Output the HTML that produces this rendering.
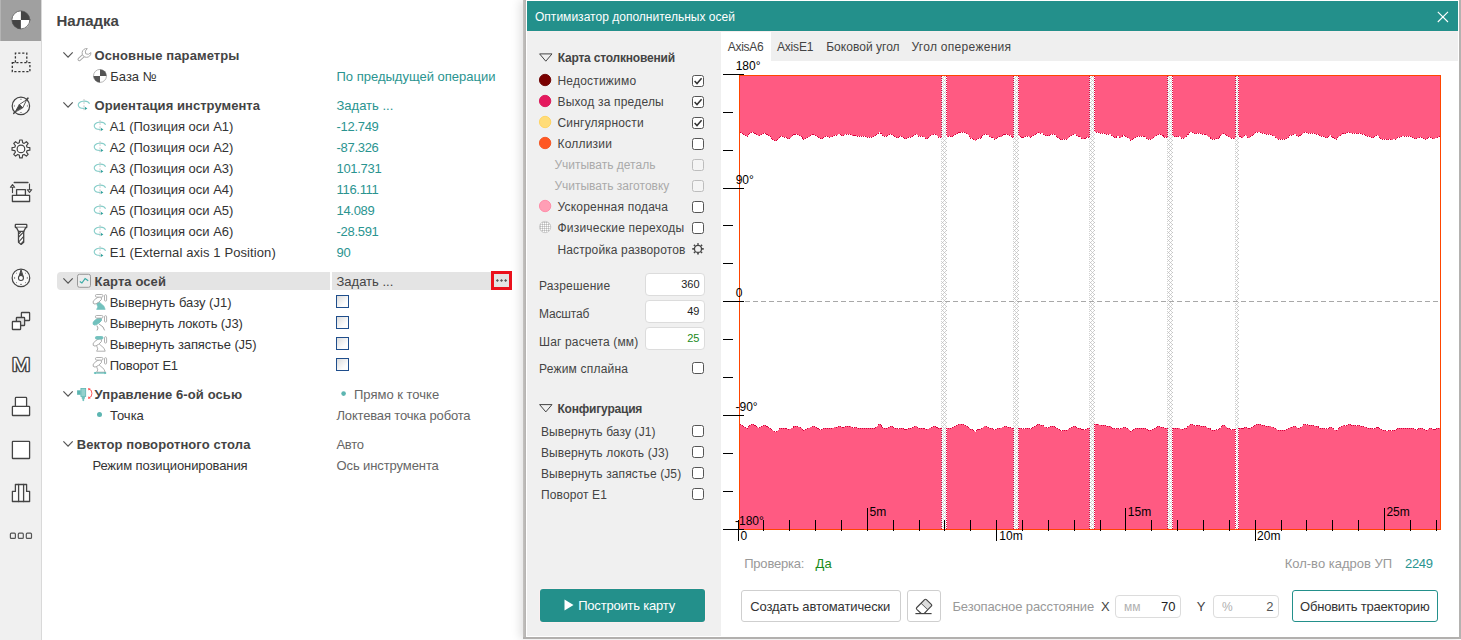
<!DOCTYPE html>
<html lang="ru"><head><meta charset="utf-8"><title>Оптимизатор дополнительных осей</title>
<style>
html,body{margin:0;padding:0;background:#fff;}
body{width:1461px;height:640px;position:relative;overflow:hidden;font-family:"Liberation Sans", sans-serif;}
.t{position:absolute;white-space:nowrap;line-height:1;}
.b{position:absolute;}
svg{position:absolute;left:0;top:0;overflow:visible}
</style></head><body>
<div class="b" style="left:0px;top:0px;width:41px;height:640px;background:#f0f0f0"></div>
<div class="b" style="left:41px;top:0px;width:1px;height:640px;background:#d9d9d9"></div>
<div class="b" style="left:0px;top:0px;width:41px;height:41px;background:#a0a0a0"></div>
<div class="b" style="left:0px;top:0px;width:1px;height:41px;background:#b4b4b4"></div>
<div class="t" style="left:56.5px;top:13.30px;font-size:15px;font-weight:bold;color:#444;">Наладка</div>
<div class="t" style="left:94.5px;top:49.00px;font-size:13px;font-weight:bold;color:#444;letter-spacing:0.1px;">Основные параметры</div>
<div class="t" style="left:110.3px;top:70.00px;font-size:13px;color:#333;">База №</div>
<div class="t" style="left:336.5px;top:70.00px;font-size:13px;color:#2a9490;">По предыдущей операции</div>
<div class="t" style="left:94.5px;top:99.00px;font-size:13px;font-weight:bold;color:#444;letter-spacing:0.05px;">Ориентация инструмента</div>
<div class="t" style="left:336.5px;top:99.00px;font-size:13px;color:#2a9490;">Задать ...</div>
<div class="t" style="left:109.7px;top:120.00px;font-size:13px;color:#333;">A1 (Позиция оси A1)</div>
<div class="t" style="left:336.5px;top:120.00px;font-size:13px;color:#2a9490;letter-spacing:-0.3px;">-12.749</div>
<div class="t" style="left:109.7px;top:141.00px;font-size:13px;color:#333;">A2 (Позиция оси A2)</div>
<div class="t" style="left:336.5px;top:141.00px;font-size:13px;color:#2a9490;letter-spacing:-0.3px;">-87.326</div>
<div class="t" style="left:109.7px;top:162.00px;font-size:13px;color:#333;">A3 (Позиция оси A3)</div>
<div class="t" style="left:336.5px;top:162.00px;font-size:13px;color:#2a9490;letter-spacing:-0.3px;">101.731</div>
<div class="t" style="left:109.7px;top:183.00px;font-size:13px;color:#333;">A4 (Позиция оси A4)</div>
<div class="t" style="left:336.5px;top:183.00px;font-size:13px;color:#2a9490;letter-spacing:-0.3px;">116.111</div>
<div class="t" style="left:109.7px;top:204.00px;font-size:13px;color:#333;">A5 (Позиция оси A5)</div>
<div class="t" style="left:336.5px;top:204.00px;font-size:13px;color:#2a9490;letter-spacing:-0.3px;">14.089</div>
<div class="t" style="left:109.7px;top:225.00px;font-size:13px;color:#333;">A6 (Позиция оси A6)</div>
<div class="t" style="left:336.5px;top:225.00px;font-size:13px;color:#2a9490;letter-spacing:-0.3px;">-28.591</div>
<div class="t" style="left:109.7px;top:246.00px;font-size:13px;color:#333;letter-spacing:0.1px;">E1 (External axis 1 Position)</div>
<div class="t" style="left:336.5px;top:246.00px;font-size:13px;color:#2a9490;letter-spacing:-0.3px;">90</div>
<div class="b" style="left:57px;top:272px;width:273px;height:18px;background:#e4e4e4;border-radius:4px 0 0 4px"></div>
<div class="b" style="left:332px;top:272px;width:160px;height:18px;background:#e4e4e4"></div>
<div class="b" style="left:491px;top:271px;width:21px;height:19px;background:#e4e4e4;border:3px solid #eb111c;box-sizing:border-box"></div>
<div class="t" style="left:94.5px;top:275.00px;font-size:13px;font-weight:bold;color:#444;letter-spacing:0.1px;">Карта осей</div>
<div class="t" style="left:336.5px;top:275.00px;font-size:13px;color:#444;">Задать ...</div>
<div class="t" style="left:109.7px;top:296.00px;font-size:13px;color:#333;">Вывернуть базу (J1)</div>
<div class="b" style="left:336px;top:295px;width:13px;height:13px;box-sizing:border-box;border:1px solid #1f4e8c;background:linear-gradient(135deg,#dcdcdc,#fdfdfd 70%)"></div>
<div class="t" style="left:109.7px;top:317.00px;font-size:13px;color:#333;letter-spacing:-0.13px;">Вывернуть локоть (J3)</div>
<div class="b" style="left:336px;top:316px;width:13px;height:13px;box-sizing:border-box;border:1px solid #1f4e8c;background:linear-gradient(135deg,#dcdcdc,#fdfdfd 70%)"></div>
<div class="t" style="left:109.7px;top:338.00px;font-size:13px;color:#333;letter-spacing:-0.1px;">Вывернуть запястье (J5)</div>
<div class="b" style="left:336px;top:337px;width:13px;height:13px;box-sizing:border-box;border:1px solid #1f4e8c;background:linear-gradient(135deg,#dcdcdc,#fdfdfd 70%)"></div>
<div class="t" style="left:109.7px;top:359.00px;font-size:13px;color:#333;letter-spacing:-0.2px;">Поворот E1</div>
<div class="b" style="left:336px;top:358px;width:13px;height:13px;box-sizing:border-box;border:1px solid #1f4e8c;background:linear-gradient(135deg,#dcdcdc,#fdfdfd 70%)"></div>
<div class="t" style="left:94.5px;top:388.00px;font-size:13px;font-weight:bold;color:#444;letter-spacing:0.1px;">Управление 6-ой осью</div>
<div class="t" style="left:354px;top:388.00px;font-size:13px;color:#666;">Прямо к точке</div>
<div class="t" style="left:110px;top:409.00px;font-size:13px;color:#333;">Точка</div>
<div class="t" style="left:336.5px;top:409.00px;font-size:13px;color:#666;letter-spacing:-0.17px;">Локтевая точка робота</div>
<div class="t" style="left:76.7px;top:438.00px;font-size:13px;font-weight:bold;color:#444;letter-spacing:0.1px;">Вектор поворотного стола</div>
<div class="t" style="left:336.5px;top:437.60px;font-size:13px;color:#666;letter-spacing:-0.3px;">Авто</div>
<div class="t" style="left:92.4px;top:459.00px;font-size:13px;color:#333;letter-spacing:-0.1px;">Режим позиционирования</div>
<div class="t" style="left:336.5px;top:459.00px;font-size:13px;color:#666;letter-spacing:-0.1px;">Ось инструмента</div>
<div class="b" style="left:523px;top:0px;width:938px;height:639px;background:#fff;box-shadow:-3px 0 9px rgba(0,0,0,0.12);"></div>
<div class="b" style="left:523px;top:0px;width:3px;height:639px;background:linear-gradient(90deg,#c4c2c0,#b4b2b0)"></div>
<div class="b" style="left:523px;top:637px;width:938px;height:2px;background:#b2b0ae"></div>
<div class="b" style="left:1459px;top:0px;width:2px;height:639px;background:#b4b2b0"></div>
<div class="b" style="left:526px;top:0px;width:933px;height:1px;background:#fff"></div>
<div class="b" style="left:527px;top:1px;width:931px;height:30px;background:#23908b"></div>
<div class="t" style="left:535px;top:11.34px;font-size:12px;color:#fff;letter-spacing:0.02px;">Оптимизатор дополнительных осей</div>
<div class="b" style="left:527px;top:32px;width:194px;height:604px;background:#f0f0f0"></div>
<div class="b" style="left:771px;top:31px;width:687px;height:29.5px;background:#efefef"></div>
<div class="b" style="left:527px;top:31px;width:931px;height:1px;background:#f8eeee"></div>
<div class="t" style="left:557.7px;top:51.64px;font-size:12px;font-weight:bold;color:#444;letter-spacing:-0.2px;">Карта столкновений</div>
<div class="t" style="left:557.5px;top:74.54px;font-size:12px;color:#444;letter-spacing:0.2px;">Недостижимо</div>
<div class="b" style="left:692px;top:75px;width:12px;height:12px;box-sizing:border-box;border:1px solid #555;border-radius:2.5px;background:#fff"></div>
<svg class="b" style="left:692px;top:75px" width="12" height="12" viewBox="0 0 12 12"><path d="M2.6 6.1 L5 8.6 L9.6 3.2" fill="none" stroke="#333" stroke-width="1.5"/></svg>
<div class="t" style="left:557.5px;top:95.54px;font-size:12px;color:#444;letter-spacing:0.2px;">Выход за пределы</div>
<div class="b" style="left:692px;top:96px;width:12px;height:12px;box-sizing:border-box;border:1px solid #555;border-radius:2.5px;background:#fff"></div>
<svg class="b" style="left:692px;top:96px" width="12" height="12" viewBox="0 0 12 12"><path d="M2.6 6.1 L5 8.6 L9.6 3.2" fill="none" stroke="#333" stroke-width="1.5"/></svg>
<div class="t" style="left:557.5px;top:116.54px;font-size:12px;color:#444;letter-spacing:0.2px;">Сингулярности</div>
<div class="b" style="left:692px;top:117px;width:12px;height:12px;box-sizing:border-box;border:1px solid #555;border-radius:2.5px;background:#fff"></div>
<svg class="b" style="left:692px;top:117px" width="12" height="12" viewBox="0 0 12 12"><path d="M2.6 6.1 L5 8.6 L9.6 3.2" fill="none" stroke="#333" stroke-width="1.5"/></svg>
<div class="t" style="left:557.5px;top:137.54px;font-size:12px;color:#444;letter-spacing:0.2px;">Коллизии</div>
<div class="b" style="left:692px;top:138px;width:12px;height:12px;box-sizing:border-box;border:1px solid #555;border-radius:2.5px;background:#fff"></div>
<div class="t" style="left:554.4px;top:158.54px;font-size:12px;color:#aaa;">Учитывать деталь</div>
<div class="b" style="left:692px;top:159px;width:12px;height:12px;box-sizing:border-box;border:1px solid #bdbdbd;border-radius:2.5px;background:#f4f4f4"></div>
<div class="t" style="left:554.4px;top:179.54px;font-size:12px;color:#aaa;">Учитывать заготовку</div>
<div class="b" style="left:692px;top:180px;width:12px;height:12px;box-sizing:border-box;border:1px solid #bdbdbd;border-radius:2.5px;background:#f4f4f4"></div>
<div class="t" style="left:557.5px;top:200.54px;font-size:12px;color:#444;letter-spacing:0.2px;">Ускоренная подача</div>
<div class="b" style="left:692px;top:201px;width:12px;height:12px;box-sizing:border-box;border:1px solid #555;border-radius:2.5px;background:#fff"></div>
<div class="t" style="left:557.5px;top:221.54px;font-size:12px;color:#444;letter-spacing:0.2px;">Физические переходы</div>
<div class="b" style="left:692px;top:222px;width:12px;height:12px;box-sizing:border-box;border:1px solid #555;border-radius:2.5px;background:#fff"></div>
<div class="t" style="left:557.5px;top:243.54px;font-size:12px;color:#444;letter-spacing:0.12px;">Настройка разворотов</div>
<div class="t" style="left:539px;top:279.54px;font-size:12px;color:#444;letter-spacing:0.2px;">Разрешение</div>
<div class="b" style="left:645px;top:273px;width:60px;height:23px;box-sizing:border-box;border:1px solid #dcdcdc;border-radius:4px;background:#fff"></div>
<div class="t" style="right:761.5px;top:279.39px;font-size:11px;color:#222;">360</div>
<div class="t" style="left:539px;top:308.04px;font-size:12px;color:#444;letter-spacing:-0.15px;">Масштаб</div>
<div class="b" style="left:645px;top:300px;width:60px;height:23px;box-sizing:border-box;border:1px solid #dcdcdc;border-radius:4px;background:#fff"></div>
<div class="t" style="right:761.5px;top:306.39px;font-size:11px;color:#222;">49</div>
<div class="t" style="left:539px;top:335.94px;font-size:12px;color:#444;letter-spacing:0.15px;">Шаг расчета (мм)</div>
<div class="b" style="left:645px;top:327px;width:60px;height:23px;box-sizing:border-box;border:1px solid #dcdcdc;border-radius:4px;background:#fff"></div>
<div class="t" style="right:761.5px;top:333.39px;font-size:11px;color:#1a8a1a;">25</div>
<div class="t" style="left:539px;top:363.34px;font-size:12px;color:#444;letter-spacing:0.2px;">Режим сплайна</div>
<div class="b" style="left:692px;top:362px;width:12px;height:12px;box-sizing:border-box;border:1px solid #555;border-radius:2.5px;background:#fff"></div>
<div class="t" style="left:557.5px;top:402.84px;font-size:12px;font-weight:bold;color:#444;letter-spacing:-0.2px;">Конфигурация</div>
<div class="t" style="left:541px;top:425.54px;font-size:12px;color:#444;letter-spacing:0.12px;">Вывернуть базу (J1)</div>
<div class="b" style="left:692px;top:425px;width:12px;height:12px;box-sizing:border-box;border:1px solid #555;border-radius:2.5px;background:#fff"></div>
<div class="t" style="left:541px;top:446.54px;font-size:12px;color:#444;letter-spacing:0.12px;">Вывернуть локоть (J3)</div>
<div class="b" style="left:692px;top:446px;width:12px;height:12px;box-sizing:border-box;border:1px solid #555;border-radius:2.5px;background:#fff"></div>
<div class="t" style="left:541px;top:467.54px;font-size:12px;color:#444;letter-spacing:0.12px;">Вывернуть запястье (J5)</div>
<div class="b" style="left:692px;top:467px;width:12px;height:12px;box-sizing:border-box;border:1px solid #555;border-radius:2.5px;background:#fff"></div>
<div class="t" style="left:541px;top:488.54px;font-size:12px;color:#444;letter-spacing:0.12px;">Поворот E1</div>
<div class="b" style="left:692px;top:488px;width:12px;height:12px;box-sizing:border-box;border:1px solid #555;border-radius:2.5px;background:#fff"></div>
<div class="b" style="left:540px;top:589px;width:165px;height:33px;background:#23908b;border-radius:3px;box-shadow:0 0 0 1px #fbefef"></div>
<div class="t" style="left:578.2px;top:599.00px;font-size:13px;color:#fff;letter-spacing:-0.2px;">Построить карту</div>
<svg class="b" style="left:562.7px;top:598px" width="12" height="14" viewBox="0 0 12 14"><path d="M1.5 1.5 L10.5 7 L1.5 12.5 Z" fill="#fff"/></svg>
<div class="t" style="left:727.8px;top:40.54px;font-size:12px;color:#444;letter-spacing:-0.3px;">AxisA6</div>
<div class="t" style="left:776.9px;top:40.54px;font-size:12px;color:#444;letter-spacing:-0.15px;">AxisE1</div>
<div class="t" style="left:826.2px;top:40.54px;font-size:12px;color:#444;letter-spacing:0.03px;">Боковой угол</div>
<div class="t" style="left:911.4px;top:40.54px;font-size:12px;color:#444;letter-spacing:0.3px;">Угол опережения</div>
<div class="t" style="left:744.2px;top:557.30px;font-size:13px;color:#999;letter-spacing:-0.2px;">Проверка:</div>
<div class="t" style="left:815.6px;top:557.30px;font-size:13px;color:#1a8a1a;">Да</div>
<div class="t" style="left:1284.7px;top:557.30px;font-size:13px;color:#999;">Кол-во кадров УП</div>
<div class="t" style="left:1405px;top:557.30px;font-size:13px;color:#2a9490;letter-spacing:-0.3px;">2249</div>
<div class="b" style="left:741px;top:590px;width:160px;height:32px;box-sizing:border-box;border:1px solid #cfcfcf;border-radius:3px;background:#fff"></div>
<div class="t" style="left:750.3px;top:600.30px;font-size:13px;color:#333;letter-spacing:-0.12px;">Создать автоматически</div>
<div class="b" style="left:907px;top:590px;width:34px;height:32px;box-sizing:border-box;border:1px solid #cfcfcf;border-radius:3px;background:#fff"></div>
<div class="t" style="left:952.4px;top:600.30px;font-size:13px;color:#999;letter-spacing:-0.1px;">Безопасное расстояние</div>
<div class="t" style="left:1101px;top:600.30px;font-size:13px;color:#444;">X</div>
<div class="b" style="left:1115px;top:595px;width:66px;height:23px;box-sizing:border-box;border:1px solid #dcdcdc;border-radius:4px;background:#fff"></div>
<div class="t" style="right:285.5px;top:599.70px;font-size:13px;color:#222;">70</div>
<div class="t" style="left:1124px;top:600.84px;font-size:12px;color:#b0b0b0;">мм</div>
<div class="t" style="left:1196.8px;top:600.30px;font-size:13px;color:#444;">Y</div>
<div class="b" style="left:1213px;top:595px;width:66px;height:23px;box-sizing:border-box;border:1px solid #dcdcdc;border-radius:4px;background:#fff"></div>
<div class="t" style="right:187.5px;top:599.70px;font-size:13px;color:#555;">2</div>
<div class="t" style="left:1222px;top:600.84px;font-size:12px;color:#b0b0b0;">%</div>
<div class="b" style="left:1292px;top:590px;width:146px;height:32px;box-sizing:border-box;border:1px solid #23908b;border-radius:3px;background:#fff"></div>
<div class="t" style="left:1300px;top:600.30px;font-size:13px;color:#333;letter-spacing:-0.2px;">Обновить траекторию</div>
<svg width="42" height="640" viewBox="0 0 42 640" fill="none" stroke="#444" stroke-width="1.3" stroke-linejoin="round" stroke-linecap="round">
<!-- 1 base -->
<g stroke="none">
<circle cx="20.9" cy="19.9" r="9.2" fill="#fff"/>
<path d="M20.9 19.9 V10.7 A9.2 9.2 0 0 1 30.1 19.9 Z" fill="#444"/>
<path d="M20.9 19.9 V29.1 A9.2 9.2 0 0 1 11.7 19.9 Z" fill="#444"/>
</g>
<circle cx="20.9" cy="19.9" r="9" stroke="#555" stroke-width="0.8"/>
<!-- 2 dashed -->
<g stroke="#333" stroke-dasharray="2.2 1.8" stroke-linecap="butt" stroke-linejoin="miter">
<path d="M15.4 62.4 V53.2 H26.8 V62.4"/>
<rect x="12.3" y="62.7" width="17.6" height="9"/>
</g>
<!-- 3 compass -->
<circle cx="20.9" cy="105.9" r="8.7" fill="#fafafa" stroke-width="1.2"/>
<path d="M26.4 99.9 L19.3 104.6 L22.4 107.7 Z" fill="#fff" stroke-width="0.9"/>
<path d="M15.2 111.8 L19.3 104.6 L22.4 107.7 Z" fill="#444" stroke-width="0.9"/>
<path d="M26.8 99.3 L28 98.2 M14.8 112.2 L13.8 113.3" stroke-width="1.6"/>
<path d="M20.3 99.3 h1.2 M20.3 112.5 h1.2 M14.4 105.3 v1.2 M27.4 105.3 v1.2" stroke="#888" stroke-width="0.8"/>
<!-- 4 gear -->
<path id="gear" fill="#fafafa" stroke-width="1.2" d="M19.30 142.72 L19.69 139.99 L22.21 139.99 L22.60 142.72 L24.16 143.36 L26.36 141.71 L28.14 143.49 L26.49 145.69 L27.13 147.25 L29.86 147.64 L29.86 150.16 L27.13 150.55 L26.49 152.11 L28.14 154.31 L26.36 156.09 L24.16 154.44 L22.60 155.08 L22.21 157.81 L19.69 157.81 L19.30 155.08 L17.74 154.44 L15.54 156.09 L13.76 154.31 L15.41 152.11 L14.77 150.55 L12.04 150.16 L12.04 147.64 L14.77 147.25 L15.41 145.69 L13.76 143.49 L15.54 141.71 L17.74 143.36 Z"/>
<circle cx="20.95" cy="148.9" r="3.8" stroke-width="1.2"/>
<!-- 5 setup -->
<path d="M14.2 182.5 H28" stroke-width="1.3"/>
<path d="M12.5 192.6 V187.4 M10.4 187.3 L12.5 184.5 L14.7 187.3 Z" fill="#fff" stroke-width="1.1"/>
<path d="M29.5 184 V189.6 M27.3 189.7 L29.5 192.5 L31.7 189.7 Z" fill="#fff" stroke-width="1.1"/>
<rect x="16.6" y="189.6" width="8.8" height="5.8" fill="#fafafa"/>
<rect x="12.4" y="195.4" width="17.2" height="6.1" fill="#fafafa"/>
<!-- 6 mill -->
<rect x="15.3" y="224.4" width="11.5" height="3.1" rx="0.6" fill="#fafafa"/>
<path d="M16.5 227.6 L18.5 231.5 H23.7 L25.7 227.6" fill="#fafafa"/>
<path d="M18.5 231.5 V242.3 L21.1 244.4 L23.7 242.3 V231.5" fill="#fafafa"/>
<path d="M18.5 231.5 H23.7" stroke-width="1.1"/>
<path d="M18.7 237 L23.5 232.2 M18.7 242 L23.5 236.6 M19.2 233.5 L21 231.7 M21.3 243.6 L23.5 241.2" stroke-width="1.1"/>
<!-- 7 dial -->
<circle cx="20.95" cy="277.9" r="8.8" fill="#fafafa" stroke-width="1.2"/>
<path d="M20.95 270.2 L19 276.6 H22.9 Z" fill="#444" stroke-width="1"/>
<circle cx="20.95" cy="278" r="2.5" fill="#fff" stroke-width="1.1"/>
<g stroke="#777" stroke-width="0.9"><path d="M16.5 273.2 h0.1 M25.4 273.2 h0.1 M16.5 282.6 h0.1 M25.4 282.6 h0.1 M14.6 277.3 v1.2 M27.3 277.3 v1.2 M20.4 284.4 h1.2"/></g>
<!-- 8 squares -->
<rect x="21.4" y="312.5" width="8.2" height="8" rx="0.6" fill="#f8f8f8"/>
<rect x="16.4" y="317.5" width="8.2" height="8" rx="0.6" fill="#e0e0e0"/>
<rect x="12.4" y="321.5" width="8.2" height="8" rx="0.6" fill="#fff"/>
<!-- 9 M -->
<text x="0" y="0" transform="translate(21.1 370.9) scale(1.2 1)" text-anchor="middle" font-family="Liberation Sans, sans-serif" font-size="18.2" fill="#fff" stroke="#444" stroke-width="2.5" stroke-linejoin="round" paint-order="stroke">M</text>
<!-- 10 -->
<path d="M15.4 406.3 V398.2 Q15.4 397.4 16.2 397.4 H25.8 Q26.6 397.4 26.6 398.2 V406.3" fill="#fff"/>
<rect x="12.4" y="406.3" width="17.2" height="9.2" rx="0.6" fill="#fff"/>
<!-- 11 -->
<rect x="12.4" y="441.3" width="17.2" height="17.2" rx="0.6" fill="#fff"/>
<!-- 12 -->
<path d="M15.4 484.5 H26.6 V491.4 H29.6 V501.5 H12.4 V491.4 H15.4 Z" fill="#fafafa"/>
<path d="M18.6 484.5 V501.5 M23.6 484.5 V501.5"/>
<!-- 13 -->
<g stroke="#555" stroke-width="1.2">
<rect x="10.4" y="533.2" width="5" height="5.2" rx="1"/>
<rect x="18.3" y="533.2" width="5" height="5.2" rx="1"/>
<rect x="26.3" y="533.2" width="5.2" height="5.2" rx="1"/>
</g>
</svg>

<svg width="525" height="640" viewBox="0 0 525 640" fill="none">
<path d="M63.4 52.4 L68.05 57.1 L72.7 52.4" stroke="#555" stroke-width="1.25"/>
<path d="M63.4 102.4 L68.05 107.1 L72.7 102.4" stroke="#555" stroke-width="1.25"/>
<path d="M63.4 278.4 L68.05 283.1 L72.7 278.4" stroke="#555" stroke-width="1.25"/>
<path d="M63.4 391.4 L68.05 396.1 L72.7 391.4" stroke="#555" stroke-width="1.25"/>
<path d="M63.4 441.4 L68.05 446.1 L72.7 441.4" stroke="#555" stroke-width="1.25"/>
<g stroke="#a9a9a9" stroke-width="1" fill="#fff" stroke-linejoin="round"><path d="M79.3 59.3 L83.4 55.6" stroke-width="3.6" stroke-linecap="round"/><path d="M79.3 59.3 L84 55.1" stroke="#fff" stroke-width="1.7" stroke-linecap="round"/><path d="M87.3 48.6 A4.4 4.4 0 1 0 90.9 52.6 L88.4 54.3 L85.7 53.8 L85.3 51 Z"/></g>
<circle cx="100" cy="75.9" r="6.5" fill="#fff" stroke="#b5b5b5" stroke-width="1"/>
<path d="M100 75.9 V69.4 A6.5 6.5 0 0 1 106.5 75.9 Z" fill="#555"/>
<path d="M100 75.9 V82.4 A6.5 6.5 0 0 1 93.5 75.9 Z" fill="#555"/>
<g><path d="M89.6 103.8 A5.8 3.6 0 1 0 84.4 108.4" stroke="#86cdc9" stroke-width="1.1"/><path d="M84.8 106.7 L87.4 108.4 L84.8 110.0 Z" fill="#2ea09b"/><path d="M84.0 99.0 V111.0" stroke="#c4c4c4" stroke-width="1" stroke-dasharray="1.6 1.6"/></g>
<g><path d="M105.6 124.8 A5.8 3.6 0 1 0 100.4 129.4" stroke="#86cdc9" stroke-width="1.1"/><path d="M100.8 127.7 L103.4 129.4 L100.8 131.0 Z" fill="#2ea09b"/><path d="M100.0 120.0 V132.0" stroke="#c4c4c4" stroke-width="1" stroke-dasharray="1.6 1.6"/></g>
<g><path d="M105.6 145.8 A5.8 3.6 0 1 0 100.4 150.4" stroke="#86cdc9" stroke-width="1.1"/><path d="M100.8 148.7 L103.4 150.4 L100.8 152.0 Z" fill="#2ea09b"/><path d="M100.0 141.0 V153.0" stroke="#c4c4c4" stroke-width="1" stroke-dasharray="1.6 1.6"/></g>
<g><path d="M105.6 166.8 A5.8 3.6 0 1 0 100.4 171.4" stroke="#86cdc9" stroke-width="1.1"/><path d="M100.8 169.7 L103.4 171.4 L100.8 173.0 Z" fill="#2ea09b"/><path d="M100.0 162.0 V174.0" stroke="#c4c4c4" stroke-width="1" stroke-dasharray="1.6 1.6"/></g>
<g><path d="M105.6 187.8 A5.8 3.6 0 1 0 100.4 192.4" stroke="#86cdc9" stroke-width="1.1"/><path d="M100.8 190.7 L103.4 192.4 L100.8 194.0 Z" fill="#2ea09b"/><path d="M100.0 183.0 V195.0" stroke="#c4c4c4" stroke-width="1" stroke-dasharray="1.6 1.6"/></g>
<g><path d="M105.6 208.8 A5.8 3.6 0 1 0 100.4 213.4" stroke="#86cdc9" stroke-width="1.1"/><path d="M100.8 211.7 L103.4 213.4 L100.8 215.0 Z" fill="#2ea09b"/><path d="M100.0 204.0 V216.0" stroke="#c4c4c4" stroke-width="1" stroke-dasharray="1.6 1.6"/></g>
<g><path d="M105.6 229.8 A5.8 3.6 0 1 0 100.4 234.4" stroke="#86cdc9" stroke-width="1.1"/><path d="M100.8 232.7 L103.4 234.4 L100.8 236.0 Z" fill="#2ea09b"/><path d="M100.0 225.0 V237.0" stroke="#c4c4c4" stroke-width="1" stroke-dasharray="1.6 1.6"/></g>
<g><path d="M105.6 250.8 A5.8 3.6 0 1 0 100.4 255.4" stroke="#86cdc9" stroke-width="1.1"/><path d="M100.8 253.7 L103.4 255.4 L100.8 257.0 Z" fill="#2ea09b"/><path d="M100.0 246.0 V258.0" stroke="#c4c4c4" stroke-width="1" stroke-dasharray="1.6 1.6"/></g>
<rect x="77.5" y="274.3" width="13" height="13" rx="2" fill="#ececec" stroke="#999" stroke-width="1"/>
<path d="M79.8 281.4 L81.9 283 L85.1 278.6 L88.2 280.8" stroke="#3aaba6" stroke-width="1.2"/>
<path d="M96.3 303.0 L98.6 301.4 L104 306.2 L105.2 309.4 H96.6 L97.8 306.9 Z" fill="#72c1bd" stroke="#72c1bd" stroke-width="0.6"/>
<ellipse cx="97.3" cy="300.4" rx="5" ry="2.3" transform="rotate(-35 97.3 300.4)" fill="#fff" stroke="#a8a8a8" stroke-width="0.9"/>
<rect x="95.4" y="294.5" width="7.6" height="2.6" rx="1.3" fill="#fff" stroke="#a8a8a8" stroke-width="0.9"/>
<rect x="104.5" y="294.7" width="2.1" height="6.4" rx="1.05" fill="#fff" stroke="#a8a8a8" stroke-width="0.9"/>
<path d="M96.8 325.5 L98 328.0 L97 330.4 M98.8 323.8 L103 327.0 L104.6 330.4" stroke="#999" stroke-width="0.9"/>
<ellipse cx="97.3" cy="321.4" rx="5" ry="2.3" transform="rotate(-35 97.3 321.4)" fill="#72c1bd" stroke="#72c1bd" stroke-width="0.9"/>
<rect x="95.4" y="315.5" width="7.6" height="2.6" rx="1.3" fill="#fff" stroke="#a8a8a8" stroke-width="0.9"/>
<rect x="104.5" y="315.7" width="2.1" height="6.4" rx="1.05" fill="#fff" stroke="#a8a8a8" stroke-width="0.9"/>
<path d="M96.3 345.0 L98.6 343.4 L104 348.2 L105.2 351.2 H96.6 L97.8 348.9 Z" fill="#fff" stroke="#a8a8a8" stroke-width="0.9"/>
<ellipse cx="97.3" cy="342.4" rx="5" ry="2.3" transform="rotate(-35 97.3 342.4)" fill="#fff" stroke="#a8a8a8" stroke-width="0.9"/>
<rect x="95.4" y="336.5" width="7.6" height="2.6" rx="1.3" fill="#72c1bd" stroke="#72c1bd" stroke-width="0.9"/>
<rect x="104.5" y="336.7" width="2.1" height="6.4" rx="1.05" fill="#fff" stroke="#a8a8a8" stroke-width="0.9"/>
<path d="M96.3 366.0 L98.6 364.4 L104 369.2 L105.2 372.2 H96.6 L97.8 369.9 Z" fill="#fff" stroke="#a8a8a8" stroke-width="0.9"/>
<ellipse cx="97.3" cy="363.4" rx="5" ry="2.3" transform="rotate(-35 97.3 363.4)" fill="#fff" stroke="#a8a8a8" stroke-width="0.9"/>
<rect x="95.4" y="357.5" width="7.6" height="2.6" rx="1.3" fill="#fff" stroke="#a8a8a8" stroke-width="0.9"/>
<rect x="104.5" y="357.7" width="2.1" height="6.4" rx="1.05" fill="#fff" stroke="#a8a8a8" stroke-width="0.9"/>
<path d="M94.6 373.0 H105.6" stroke="#4bb3ae" stroke-width="1.1"/>
<path d="M93.6 373.0 l2 -1.3 v2.6 Z M106.6 373.0 l-2 -1.3 v2.6 Z" fill="#4bb3ae"/>
<g fill="#555"><path d="M495.9 280.6 L497.4 279.1 L498.9 280.6 L497.4 282.1 Z"/><path d="M500.0 280.6 L501.5 279.1 L503.0 280.6 L501.5 282.1 Z"/><path d="M504.1 280.6 L505.6 279.1 L507.1 280.6 L505.6 282.1 Z"/></g>
<rect x="77.1" y="390.3" width="3.6" height="4.5" fill="#5cb5b1"/>
<rect x="80.9" y="388.5" width="4.8" height="8" fill="#93d1cd" stroke="#5cb5b1" stroke-width="0.8"/>
<path d="M81.7 396.8 H84.9 V398.8 H84.2 V400.6 L83.3 401.2 L82.4 400.6 V398.8 H81.7 Z" fill="#6fc0bc"/>
<path d="M88.6 389 Q92.2 389.5 91.9 393.4 Q92.2 397.4 88.6 397.9" stroke="#ff4a4a" stroke-width="0.9"/>
<path d="M88 388.2 L90.6 388.4 L88.6 390.6 Z M88 398.7 L90.6 398.5 L88.6 396.3 Z" fill="#ff4a4a"/>
<circle cx="99.5" cy="414.6" r="2.5" fill="#5cb5b1"/>
<circle cx="343.6" cy="393.6" r="2.3" fill="#5cb5b1"/>
</svg>
<svg width="1461" height="640" viewBox="0 0 1461 640" fill="none">
<defs><pattern id="hatch" width="4" height="4" patternUnits="userSpaceOnUse"><rect width="4" height="4" fill="#fff"/><g fill="#d2d2d2"><rect x="0" y="0" width="1" height="1" fill="#c4c4c4"/><rect x="1" y="1" width="1" height="1"/><rect x="3" y="1" width="1" height="1"/><rect x="2" y="2" width="1" height="1" fill="#c4c4c4"/><rect x="1" y="3" width="1" height="1"/><rect x="3" y="3" width="1" height="1"/></g></pattern><pattern id="grid" width="2" height="2" patternUnits="userSpaceOnUse"><rect width="2" height="2" fill="#fff"/><rect width="1" height="1" fill="#b8b8b8"/><rect x="1" y="0" width="1" height="1" fill="#d6d6d6"/><rect x="0" y="1" width="1" height="1" fill="#d6d6d6"/></pattern></defs>
<path d="M1437.8 11.8 L1448 22 M1448 11.8 L1437.8 22" stroke="#fff" stroke-width="1.1"/>
<path d="M539.6 53.9 H552 L545.8 61.2 Z" stroke="#444" stroke-width="1" fill="#f0f0f0"/>
<path d="M539.6 404.6 H552 L545.8 411.9 Z" stroke="#444" stroke-width="1" fill="#f0f0f0"/>
<circle cx="545.1" cy="80" r="5.7" fill="#7a0000" stroke="#6a0000" stroke-width="0.9"/>
<circle cx="545.1" cy="101" r="5.7" fill="#e5195e" stroke="#d81558" stroke-width="0.9"/>
<circle cx="545.1" cy="122" r="5.7" fill="#ffdc78" stroke="#ffd35c" stroke-width="0.9"/>
<circle cx="545.1" cy="143" r="5.7" fill="#ff5722" stroke="#f4511e" stroke-width="0.9"/>
<circle cx="545.1" cy="206" r="5.7" fill="#ff9eb5" stroke="#ff88a5" stroke-width="0.9"/>
<circle cx="545.1" cy="227" r="5.7" fill="url(#grid)" stroke="#c8c8c8" stroke-width="0.8"/>
<circle cx="698" cy="248.9" r="3.55" stroke="#444" stroke-width="1.3"/>
<path d="M702.10 248.90 L703.70 248.90" stroke="#444" stroke-width="1.7"/>
<path d="M700.90 251.80 L702.03 252.93" stroke="#444" stroke-width="1.7"/>
<path d="M698.00 253.00 L698.00 254.60" stroke="#444" stroke-width="1.7"/>
<path d="M695.10 251.80 L693.97 252.93" stroke="#444" stroke-width="1.7"/>
<path d="M693.90 248.90 L692.30 248.90" stroke="#444" stroke-width="1.7"/>
<path d="M695.10 246.00 L693.97 244.87" stroke="#444" stroke-width="1.7"/>
<path d="M698.00 244.80 L698.00 243.20" stroke="#444" stroke-width="1.7"/>
<path d="M700.90 246.00 L702.03 244.87" stroke="#444" stroke-width="1.7"/>
<g stroke="#444" stroke-width="1.15" stroke-linejoin="round"><path d="M920.8 603.5 L924.6 599.7 Q925.5 598.8 926.4 599.7 L931.3 604.4 Q932.2 605.3 931.3 606.2 L927.6 609.9 Z" fill="#dcdcdc"/><path d="M920.8 603.5 L916.8 607.5 Q915.9 608.4 916.8 609.3 L921.2 613.5 H924.3 L927.6 609.9" fill="#fff"/><path d="M915.4 613.6 H931.6"/></g>
<g shape-rendering="crispEdges">
<path d="M739 75 H1440 V136 L1440 136 L1440 136 L1438 137 L1436 138 L1434 139 L1432 138 L1429 137 L1427 139 L1425 139 L1423 138 L1420 137 L1418 138 L1416 139 L1414 138 L1412 137 L1410 136 L1406 136 L1403 136 L1401 137 L1399 137 L1397 138 L1396 139 L1394 139 L1392 140 L1390 139 L1389 139 L1387 140 L1385 139 L1383 139 L1382 139 L1379 137 L1377 135 L1375 136 L1373 138 L1371 137 L1369 136 L1367 136 L1365 135 L1363 134 L1361 134 L1359 133 L1357 134 L1355 133 L1353 133 L1351 133 L1349 132 L1347 133 L1345 134 L1343 133 L1341 135 L1339 136 L1337 139 L1335 139 L1332 137 L1330 135 L1327 138 L1323 136 L1320 136 L1317 134 L1315 134 L1313 133 L1311 133 L1309 133 L1308 133 L1304 132 L1303 133 L1301 135 L1299 136 L1297 136 L1295 134 L1292 135 L1290 135 L1288 138 L1285 139 L1283 139 L1281 139 L1279 139 L1277 139 L1275 137 L1274 136 L1272 135 L1270 134 L1268 134 L1266 134 L1264 133 L1262 133 L1259 132 L1257 132 L1255 133 L1253 135 L1251 136 L1249 138 L1247 137 L1245 135 L1242 138 L1239 136 L1237 137 L1235 139 L1233 138 L1231 139 L1229 137 L1227 136 L1225 134 L1223 133 L1221 135 L1219 138 L1216 139 L1214 139 L1212 139 L1209 137 L1207 136 L1205 134 L1203 134 L1201 134 L1199 133 L1197 133 L1195 134 L1193 133 L1191 132 L1189 133 L1187 136 L1185 137 L1184 138 L1181 138 L1179 136 L1176 137 L1174 136 L1172 137 L1170 137 L1166 137 L1164 137 L1163 135 L1161 135 L1159 134 L1157 135 L1155 136 L1153 138 L1152 139 L1148 139 L1146 138 L1144 136 L1142 136 L1140 136 L1138 136 L1136 137 L1134 138 L1132 140 L1130 140 L1128 138 L1126 137 L1124 135 L1120 138 L1118 136 L1115 138 L1112 136 L1110 134 L1108 134 L1106 134 L1104 133 L1102 133 L1100 133 L1097 132 L1095 132 L1092 135 L1090 137 L1088 137 L1086 138 L1083 139 L1081 138 L1079 136 L1077 136 L1075 134 L1073 135 L1071 136 L1069 137 L1067 139 L1065 139 L1063 139 L1061 140 L1059 138 L1057 137 L1055 135 L1052 134 L1050 135 L1047 136 L1045 135 L1042 133 L1040 133 L1038 132 L1036 134 L1034 135 L1032 136 L1030 138 L1028 136 L1026 136 L1023 138 L1019 136 L1016 137 L1014 138 L1012 137 L1010 135 L1008 135 L1005 134 L1003 135 L1001 137 L999 136 L997 138 L995 139 L994 139 L992 137 L990 137 L988 135 L986 134 L985 134 L983 135 L981 138 L979 138 L977 139 L975 141 L974 140 L972 138 L970 138 L969 136 L967 134 L965 133 L963 132 L960 132 L958 133 L956 134 L954 135 L952 137 L949 136 L946 137 L944 137 L940 137 L938 137 L936 135 L934 134 L932 135 L930 136 L928 138 L926 139 L924 137 L922 136 L920 136 L918 136 L916 134 L914 135 L912 137 L910 137 L908 138 L906 139 L904 138 L902 137 L900 136 L898 138 L895 137 L893 135 L891 134 L889 135 L887 136 L884 136 L882 135 L880 132 L877 134 L875 136 L872 137 L870 137 L867 137 L865 136 L862 136 L860 136 L857 136 L855 135 L852 136 L850 134 L848 134 L845 134 L843 136 L841 135 L838 134 L837 135 L835 135 L833 136 L831 137 L829 137 L827 136 L825 136 L823 138 L820 139 L819 138 L817 136 L815 135 L813 134 L811 135 L809 137 L807 137 L805 139 L803 139 L801 136 L799 135 L797 134 L795 134 L792 136 L790 138 L788 139 L786 137 L784 137 L782 136 L780 137 L777 140 L775 141 L773 140 L771 137 L769 136 L768 135 L766 134 L764 133 L762 134 L760 135 L758 136 L756 134 L754 133 L752 132 L750 133 L748 136 L746 136 L744 135 L742 133 L740 132 L740 132 Z" fill="#ff5a82"/>
<path d="M739 529 H1440 V428 L1440 428 L1440 428 L1438 428 L1436 429 L1434 430 L1432 429 L1429 428 L1427 430 L1425 430 L1423 429 L1420 428 L1418 429 L1416 430 L1414 429 L1412 428 L1410 428 L1406 428 L1403 428 L1401 428 L1399 428 L1397 429 L1396 430 L1394 430 L1392 431 L1390 430 L1389 430 L1387 431 L1385 430 L1383 430 L1382 430 L1379 428 L1377 427 L1375 428 L1373 429 L1371 428 L1369 428 L1367 428 L1365 427 L1363 426 L1361 426 L1359 425 L1357 426 L1355 425 L1353 425 L1351 425 L1349 424 L1347 425 L1345 426 L1343 425 L1341 427 L1339 428 L1337 430 L1335 430 L1332 428 L1330 427 L1327 429 L1323 428 L1320 428 L1317 426 L1315 426 L1313 425 L1311 425 L1309 425 L1308 425 L1304 424 L1303 425 L1301 427 L1299 428 L1297 428 L1295 426 L1292 427 L1290 427 L1288 429 L1285 430 L1283 430 L1281 430 L1279 430 L1277 430 L1275 428 L1274 428 L1272 427 L1270 426 L1268 426 L1266 426 L1264 425 L1262 425 L1259 424 L1257 424 L1255 425 L1253 427 L1251 428 L1249 429 L1247 428 L1245 427 L1242 429 L1239 428 L1237 428 L1235 430 L1233 429 L1231 430 L1229 428 L1227 428 L1225 426 L1223 425 L1221 427 L1219 429 L1216 430 L1214 430 L1212 430 L1209 428 L1207 428 L1205 426 L1203 426 L1201 426 L1199 425 L1197 425 L1195 426 L1193 425 L1191 424 L1189 425 L1187 428 L1185 428 L1184 429 L1181 429 L1179 428 L1176 428 L1174 428 L1172 428 L1170 428 L1166 428 L1164 428 L1163 427 L1161 427 L1159 426 L1157 427 L1155 428 L1153 429 L1152 430 L1148 430 L1146 429 L1144 428 L1142 428 L1140 428 L1138 428 L1136 428 L1134 429 L1132 431 L1130 431 L1128 429 L1126 428 L1124 427 L1120 429 L1118 428 L1115 429 L1112 428 L1110 426 L1108 426 L1106 426 L1104 425 L1102 425 L1100 425 L1097 424 L1095 424 L1092 427 L1090 428 L1088 428 L1086 429 L1083 430 L1081 429 L1079 428 L1077 428 L1075 426 L1073 427 L1071 428 L1069 428 L1067 430 L1065 430 L1063 430 L1061 431 L1059 429 L1057 428 L1055 427 L1052 426 L1050 427 L1047 428 L1045 427 L1042 425 L1040 425 L1038 424 L1036 426 L1034 427 L1032 428 L1030 429 L1028 428 L1026 428 L1023 429 L1019 428 L1016 428 L1014 429 L1012 428 L1010 427 L1008 427 L1005 426 L1003 427 L1001 428 L999 428 L997 429 L995 430 L994 430 L992 428 L990 428 L988 427 L986 426 L985 426 L983 427 L981 429 L979 429 L977 430 L975 432 L974 431 L972 429 L970 429 L969 428 L967 426 L965 425 L963 424 L960 424 L958 425 L956 426 L954 427 L952 428 L949 428 L946 428 L944 428 L940 428 L938 428 L936 427 L934 426 L932 427 L930 428 L928 429 L926 430 L924 428 L922 428 L920 428 L918 428 L916 426 L914 427 L912 428 L910 428 L908 429 L906 430 L904 429 L902 428 L900 428 L898 429 L895 428 L893 427 L891 426 L889 427 L887 428 L884 428 L882 427 L880 424 L877 426 L875 428 L872 428 L870 428 L867 428 L865 428 L862 428 L860 428 L857 428 L855 427 L852 428 L850 426 L848 426 L845 426 L843 428 L841 427 L838 426 L837 427 L835 427 L833 428 L831 428 L829 428 L827 428 L825 428 L823 429 L820 430 L819 429 L817 428 L815 427 L813 426 L811 427 L809 428 L807 428 L805 430 L803 430 L801 428 L799 427 L797 426 L795 426 L792 428 L790 429 L788 430 L786 428 L784 428 L782 428 L780 428 L777 431 L775 432 L773 431 L771 428 L769 428 L768 427 L766 426 L764 425 L762 426 L760 427 L758 428 L756 426 L754 425 L752 424 L750 425 L748 428 L746 428 L744 427 L742 425 L740 424 L740 424 Z" fill="#ff5a82"/>
<path d="M740 132 L740 132 L742 133 L744 135 L746 136 L748 136 L750 133 L752 132 L754 133 L756 134 L758 136 L760 135 L762 134 L764 133 L766 134 L768 135 L769 136 L771 137 L773 140 L775 141 L777 140 L780 137 L782 136 L784 137 L786 137 L788 139 L790 138 L792 136 L795 134 L797 134 L799 135 L801 136 L803 139 L805 139 L807 137 L809 137 L811 135 L813 134 L815 135 L817 136 L819 138 L820 139 L823 138 L825 136 L827 136 L829 137 L831 137 L833 136 L835 135 L837 135 L838 134 L841 135 L843 136 L845 134 L848 134 L850 134 L852 136 L855 135 L857 136 L860 136 L862 136 L865 136 L867 137 L870 137 L872 137 L875 136 L877 134 L880 132 L882 135 L884 136 L887 136 L889 135 L891 134 L893 135 L895 137 L898 138 L900 136 L902 137 L904 138 L906 139 L908 138 L910 137 L912 137 L914 135 L916 134 L918 136 L920 136 L922 136 L924 137 L926 139 L928 138 L930 136 L932 135 L934 134 L936 135 L938 137 L940 137 L944 137 L946 137 L949 136 L952 137 L954 135 L956 134 L958 133 L960 132 L963 132 L965 133 L967 134 L969 136 L970 138 L972 138 L974 140 L975 141 L977 139 L979 138 L981 138 L983 135 L985 134 L986 134 L988 135 L990 137 L992 137 L994 139 L995 139 L997 138 L999 136 L1001 137 L1003 135 L1005 134 L1008 135 L1010 135 L1012 137 L1014 138 L1016 137 L1019 136 L1023 138 L1026 136 L1028 136 L1030 138 L1032 136 L1034 135 L1036 134 L1038 132 L1040 133 L1042 133 L1045 135 L1047 136 L1050 135 L1052 134 L1055 135 L1057 137 L1059 138 L1061 140 L1063 139 L1065 139 L1067 139 L1069 137 L1071 136 L1073 135 L1075 134 L1077 136 L1079 136 L1081 138 L1083 139 L1086 138 L1088 137 L1090 137 L1092 135 L1095 132 L1097 132 L1100 133 L1102 133 L1104 133 L1106 134 L1108 134 L1110 134 L1112 136 L1115 138 L1118 136 L1120 138 L1124 135 L1126 137 L1128 138 L1130 140 L1132 140 L1134 138 L1136 137 L1138 136 L1140 136 L1142 136 L1144 136 L1146 138 L1148 139 L1152 139 L1153 138 L1155 136 L1157 135 L1159 134 L1161 135 L1163 135 L1164 137 L1166 137 L1170 137 L1172 137 L1174 136 L1176 137 L1179 136 L1181 138 L1184 138 L1185 137 L1187 136 L1189 133 L1191 132 L1193 133 L1195 134 L1197 133 L1199 133 L1201 134 L1203 134 L1205 134 L1207 136 L1209 137 L1212 139 L1214 139 L1216 139 L1219 138 L1221 135 L1223 133 L1225 134 L1227 136 L1229 137 L1231 139 L1233 138 L1235 139 L1237 137 L1239 136 L1242 138 L1245 135 L1247 137 L1249 138 L1251 136 L1253 135 L1255 133 L1257 132 L1259 132 L1262 133 L1264 133 L1266 134 L1268 134 L1270 134 L1272 135 L1274 136 L1275 137 L1277 139 L1279 139 L1281 139 L1283 139 L1285 139 L1288 138 L1290 135 L1292 135 L1295 134 L1297 136 L1299 136 L1301 135 L1303 133 L1304 132 L1308 133 L1309 133 L1311 133 L1313 133 L1315 134 L1317 134 L1320 136 L1323 136 L1327 138 L1330 135 L1332 137 L1335 139 L1337 139 L1339 136 L1341 135 L1343 133 L1345 134 L1347 133 L1349 132 L1351 133 L1353 133 L1355 133 L1357 134 L1359 133 L1361 134 L1363 134 L1365 135 L1367 136 L1369 136 L1371 137 L1373 138 L1375 136 L1377 135 L1379 137 L1382 139 L1383 139 L1385 139 L1387 140 L1389 139 L1390 139 L1392 140 L1394 139 L1396 139 L1397 138 L1399 137 L1401 137 L1403 136 L1406 136 L1410 136 L1412 137 L1414 138 L1416 139 L1418 138 L1420 137 L1423 138 L1425 139 L1427 139 L1429 137 L1432 138 L1434 139 L1436 138 L1438 137 L1440 136 L1440 136" stroke="#d8003c" stroke-width="1" stroke-dasharray="1 1"/>
<path d="M740 424 L740 424 L742 425 L744 427 L746 428 L748 428 L750 425 L752 424 L754 425 L756 426 L758 428 L760 427 L762 426 L764 425 L766 426 L768 427 L769 428 L771 428 L773 431 L775 432 L777 431 L780 428 L782 428 L784 428 L786 428 L788 430 L790 429 L792 428 L795 426 L797 426 L799 427 L801 428 L803 430 L805 430 L807 428 L809 428 L811 427 L813 426 L815 427 L817 428 L819 429 L820 430 L823 429 L825 428 L827 428 L829 428 L831 428 L833 428 L835 427 L837 427 L838 426 L841 427 L843 428 L845 426 L848 426 L850 426 L852 428 L855 427 L857 428 L860 428 L862 428 L865 428 L867 428 L870 428 L872 428 L875 428 L877 426 L880 424 L882 427 L884 428 L887 428 L889 427 L891 426 L893 427 L895 428 L898 429 L900 428 L902 428 L904 429 L906 430 L908 429 L910 428 L912 428 L914 427 L916 426 L918 428 L920 428 L922 428 L924 428 L926 430 L928 429 L930 428 L932 427 L934 426 L936 427 L938 428 L940 428 L944 428 L946 428 L949 428 L952 428 L954 427 L956 426 L958 425 L960 424 L963 424 L965 425 L967 426 L969 428 L970 429 L972 429 L974 431 L975 432 L977 430 L979 429 L981 429 L983 427 L985 426 L986 426 L988 427 L990 428 L992 428 L994 430 L995 430 L997 429 L999 428 L1001 428 L1003 427 L1005 426 L1008 427 L1010 427 L1012 428 L1014 429 L1016 428 L1019 428 L1023 429 L1026 428 L1028 428 L1030 429 L1032 428 L1034 427 L1036 426 L1038 424 L1040 425 L1042 425 L1045 427 L1047 428 L1050 427 L1052 426 L1055 427 L1057 428 L1059 429 L1061 431 L1063 430 L1065 430 L1067 430 L1069 428 L1071 428 L1073 427 L1075 426 L1077 428 L1079 428 L1081 429 L1083 430 L1086 429 L1088 428 L1090 428 L1092 427 L1095 424 L1097 424 L1100 425 L1102 425 L1104 425 L1106 426 L1108 426 L1110 426 L1112 428 L1115 429 L1118 428 L1120 429 L1124 427 L1126 428 L1128 429 L1130 431 L1132 431 L1134 429 L1136 428 L1138 428 L1140 428 L1142 428 L1144 428 L1146 429 L1148 430 L1152 430 L1153 429 L1155 428 L1157 427 L1159 426 L1161 427 L1163 427 L1164 428 L1166 428 L1170 428 L1172 428 L1174 428 L1176 428 L1179 428 L1181 429 L1184 429 L1185 428 L1187 428 L1189 425 L1191 424 L1193 425 L1195 426 L1197 425 L1199 425 L1201 426 L1203 426 L1205 426 L1207 428 L1209 428 L1212 430 L1214 430 L1216 430 L1219 429 L1221 427 L1223 425 L1225 426 L1227 428 L1229 428 L1231 430 L1233 429 L1235 430 L1237 428 L1239 428 L1242 429 L1245 427 L1247 428 L1249 429 L1251 428 L1253 427 L1255 425 L1257 424 L1259 424 L1262 425 L1264 425 L1266 426 L1268 426 L1270 426 L1272 427 L1274 428 L1275 428 L1277 430 L1279 430 L1281 430 L1283 430 L1285 430 L1288 429 L1290 427 L1292 427 L1295 426 L1297 428 L1299 428 L1301 427 L1303 425 L1304 424 L1308 425 L1309 425 L1311 425 L1313 425 L1315 426 L1317 426 L1320 428 L1323 428 L1327 429 L1330 427 L1332 428 L1335 430 L1337 430 L1339 428 L1341 427 L1343 425 L1345 426 L1347 425 L1349 424 L1351 425 L1353 425 L1355 425 L1357 426 L1359 425 L1361 426 L1363 426 L1365 427 L1367 428 L1369 428 L1371 428 L1373 429 L1375 428 L1377 427 L1379 428 L1382 430 L1383 430 L1385 430 L1387 431 L1389 430 L1390 430 L1392 431 L1394 430 L1396 430 L1397 429 L1399 428 L1401 428 L1403 428 L1406 428 L1410 428 L1412 428 L1414 429 L1416 430 L1418 429 L1420 428 L1423 429 L1425 430 L1427 430 L1429 428 L1432 429 L1434 430 L1436 429 L1438 428 L1440 428 L1440 428" stroke="#d8003c" stroke-width="1" stroke-dasharray="1 1"/>
<rect x="941" y="76" width="6" height="453" fill="url(#hatch)"/>
<path d="M941.5 76 V137 M941.5 428 V529" stroke="#d8003c" stroke-width="1" stroke-dasharray="1 1"/>
<path d="M946.5 76 V136 M946.5 428 V529" stroke="#d8003c" stroke-width="1" stroke-dasharray="1 1"/>
<rect x="1013" y="76" width="6" height="453" fill="url(#hatch)"/>
<path d="M1013.5 76 V137 M1013.5 428 V529" stroke="#d8003c" stroke-width="1" stroke-dasharray="1 1"/>
<path d="M1018.5 76 V136 M1018.5 428 V529" stroke="#d8003c" stroke-width="1" stroke-dasharray="1 1"/>
<rect x="1089" y="76" width="6" height="453" fill="url(#hatch)"/>
<path d="M1089.5 76 V137 M1089.5 428 V529" stroke="#d8003c" stroke-width="1" stroke-dasharray="1 1"/>
<path d="M1094.5 76 V132 M1094.5 424 V529" stroke="#d8003c" stroke-width="1" stroke-dasharray="1 1"/>
<rect x="1167" y="76" width="6" height="453" fill="url(#hatch)"/>
<path d="M1167.5 76 V137 M1167.5 428 V529" stroke="#d8003c" stroke-width="1" stroke-dasharray="1 1"/>
<path d="M1172.5 76 V136 M1172.5 428 V529" stroke="#d8003c" stroke-width="1" stroke-dasharray="1 1"/>
<rect x="1235" y="76" width="4" height="453" fill="url(#hatch)"/>
<path d="M1235.5 76 V138 M1235.5 429 V529" stroke="#d8003c" stroke-width="1" stroke-dasharray="1 1"/>
<path d="M1238.5 76 V136 M1238.5 428 V529" stroke="#d8003c" stroke-width="1" stroke-dasharray="1 1"/>
<path d="M745 301.5 H1440" stroke="#a8a8a8" stroke-width="1" stroke-dasharray="5 3"/>
<path d="M739.5 75 V529.5 M739 75.5 H1441 M1440.5 75 V530 M739 529.5 H1441" stroke="#ff4500" stroke-width="1"/>
<path d="M723 74.5 H744" stroke="#000" stroke-width="1"/>
<path d="M723 112.5 H733" stroke="#000" stroke-width="1"/>
<path d="M723 150.5 H733" stroke="#000" stroke-width="1"/>
<path d="M723 188.5 H744" stroke="#000" stroke-width="1"/>
<path d="M723 225.5 H733" stroke="#000" stroke-width="1"/>
<path d="M723 263.5 H733" stroke="#000" stroke-width="1"/>
<path d="M723 301.5 H744" stroke="#000" stroke-width="1"/>
<path d="M723 339.5 H733" stroke="#000" stroke-width="1"/>
<path d="M723 377.5 H733" stroke="#000" stroke-width="1"/>
<path d="M723 415.5 H744" stroke="#000" stroke-width="1"/>
<path d="M723 453.5 H733" stroke="#000" stroke-width="1"/>
<path d="M723 491.5 H733" stroke="#000" stroke-width="1"/>
<path d="M723 529.5 H744" stroke="#000" stroke-width="1"/>
<path d="M738.5 520 V541" stroke="#000" stroke-width="1"/>
<path d="M763.5 520 V531" stroke="#000" stroke-width="1"/>
<path d="M789.5 520 V531" stroke="#000" stroke-width="1"/>
<path d="M815.5 520 V531" stroke="#000" stroke-width="1"/>
<path d="M841.5 520 V531" stroke="#000" stroke-width="1"/>
<path d="M867.5 508 V531" stroke="#000" stroke-width="1"/>
<path d="M893.5 520 V531" stroke="#000" stroke-width="1"/>
<path d="M919.5 520 V531" stroke="#000" stroke-width="1"/>
<path d="M944.5 520 V531" stroke="#000" stroke-width="1"/>
<path d="M970.5 520 V531" stroke="#000" stroke-width="1"/>
<path d="M996.5 520 V541" stroke="#000" stroke-width="1"/>
<path d="M1022.5 520 V531" stroke="#000" stroke-width="1"/>
<path d="M1048.5 520 V531" stroke="#000" stroke-width="1"/>
<path d="M1074.5 520 V531" stroke="#000" stroke-width="1"/>
<path d="M1100.5 520 V531" stroke="#000" stroke-width="1"/>
<path d="M1125.5 508 V531" stroke="#000" stroke-width="1"/>
<path d="M1151.5 520 V531" stroke="#000" stroke-width="1"/>
<path d="M1177.5 520 V531" stroke="#000" stroke-width="1"/>
<path d="M1203.5 520 V531" stroke="#000" stroke-width="1"/>
<path d="M1229.5 520 V531" stroke="#000" stroke-width="1"/>
<path d="M1255.5 520 V541" stroke="#000" stroke-width="1"/>
<path d="M1281.5 520 V531" stroke="#000" stroke-width="1"/>
<path d="M1306.5 520 V531" stroke="#000" stroke-width="1"/>
<path d="M1332.5 520 V531" stroke="#000" stroke-width="1"/>
<path d="M1358.5 520 V531" stroke="#000" stroke-width="1"/>
<path d="M1384.5 508 V531" stroke="#000" stroke-width="1"/>
<path d="M1410.5 520 V531" stroke="#000" stroke-width="1"/>
<path d="M1436.5 520 V531" stroke="#000" stroke-width="1"/>
</g>
<text x="735.7" y="70" font-family="Liberation Sans, sans-serif" font-size="12" fill="#000" text-anchor="start">180°</text>
<text x="735.7" y="183.5" font-family="Liberation Sans, sans-serif" font-size="12" fill="#000" text-anchor="start">90°</text>
<text x="735.7" y="297" font-family="Liberation Sans, sans-serif" font-size="12" fill="#000" text-anchor="start">0</text>
<text x="735.5" y="411" font-family="Liberation Sans, sans-serif" font-size="12" fill="#000" text-anchor="start">-90°</text>
<text x="735" y="524.7" font-family="Liberation Sans, sans-serif" font-size="12" fill="#000" text-anchor="start">-180°</text>
<text x="740.5" y="539.8" font-family="Liberation Sans, sans-serif" font-size="12" fill="#000" text-anchor="start">0</text>
<text x="869.6" y="515.6" font-family="Liberation Sans, sans-serif" font-size="12" fill="#000" text-anchor="start">5m</text>
<text x="999.3" y="539.8" font-family="Liberation Sans, sans-serif" font-size="12" fill="#000" text-anchor="start">10m</text>
<text x="1127.8" y="515.6" font-family="Liberation Sans, sans-serif" font-size="12" fill="#000" text-anchor="start">15m</text>
<text x="1257.1" y="539.8" font-family="Liberation Sans, sans-serif" font-size="12" fill="#000" text-anchor="start">20m</text>
<text x="1386.4" y="515.6" font-family="Liberation Sans, sans-serif" font-size="12" fill="#000" text-anchor="start">25m</text>
</svg>
</body></html>
